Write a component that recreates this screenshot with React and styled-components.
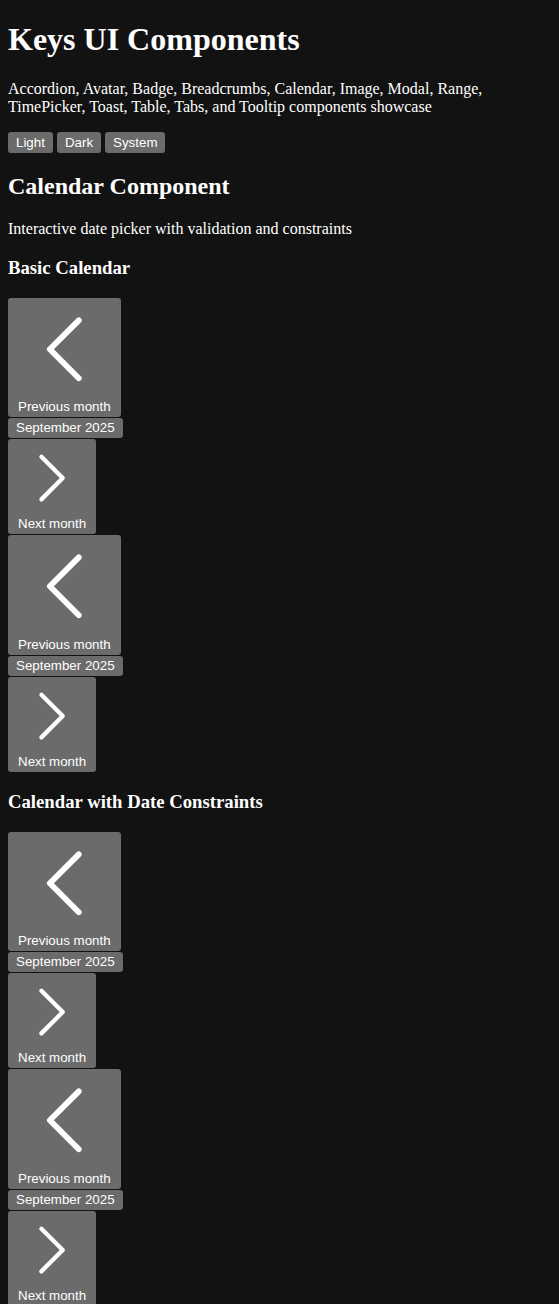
import React from "react";
import styled, { createGlobalStyle } from "styled-components";

const GlobalStyle = createGlobalStyle`
  :root {
    color-scheme: dark;
  }

  html,
  body {
    margin: 0;
    height: 100%;
    overflow: hidden;
    background: #121212;
  }

  body {
    color: #fff;
    font-family: "Liberation Serif", "Times New Roman", serif;
  }
`;

const themes = ["Light", "Dark", "System"];

const calendarDemos = [
  "Basic Calendar",
  "Calendar with Date Constraints",
  "Calendar with Disabled Dates",
  "Calendar with Initial Value",
  "Calendar with Validation",
  "Calendar in a Form",
  "Disabled Calendar",
  "Readonly Calendar",
];

const imageDemos = [
  "Basic Image",
  "Image with Fallback",
  "Lazy Loaded Image",
  "Image with Aspect Ratio",
];

const ChevronLeft = () => (
  <Chevron width="24" height="24" viewBox="0 0 24 24" aria-hidden="true">
    <path d="M15.75 19.5 8.25 12l7.5-7.5" />
  </Chevron>
);

const ChevronRight = () => (
  <Chevron width="24" height="24" viewBox="0 0 24 24" aria-hidden="true">
    <path d="m8.25 4.5 7.5 7.5-7.5 7.5" />
  </Chevron>
);

const MonthNav = ({ month }) => (
  <>
    <NavButton type="button">
      <ChevronLeft />
      <span>Previous month</span>
    </NavButton>
    <MonthLabel>{month}</MonthLabel>
    <NavButton type="button">
      <ChevronRight />
      <span>Next month</span>
    </NavButton>
  </>
);

const Calendar = ({ month }) => (
  <CalendarWrap>
    <MonthNav month={month} />
    <MonthNav month={month} />
  </CalendarWrap>
);

const App = () => {
  return (
    <Viewport>
      <GlobalStyle />
      <Page>
        <Title>Keys UI Components</Title>
        <Lead>
          Accordion, Avatar, Badge, Breadcrumbs, Calendar, Image, Modal, Range,
          TimePicker, Toast, Table, Tabs, and Tooltip components showcase
        </Lead>
        <ThemeBar>
          {themes.map((name) => (
            <ThemeButton key={name} type="button">
              {name}
            </ThemeButton>
          ))}
        </ThemeBar>

        <Section>
          <SectionTitle>Calendar Component</SectionTitle>
          <SectionText>Interactive date picker with validation and constraints</SectionText>
          {calendarDemos.map((title) => (
            <Demo key={title}>
              <DemoTitle>{title}</DemoTitle>
              <Calendar month="September 2025" />
            </Demo>
          ))}
        </Section>

        <Section>
          <SectionTitle>Image Component</SectionTitle>
          <SectionText>Responsive images with loading states and fallbacks</SectionText>
          {imageDemos.map((title) => (
            <Demo key={title}>
              <DemoTitle>{title}</DemoTitle>
              <ImageFrame role="img" aria-label={title} />
            </Demo>
          ))}
        </Section>
      </Page>
    </Viewport>
  );
};

const Viewport = styled.div`
  width: 100vw;
  height: 100vh;
  overflow: auto;
  background: #121212;
`;

const Page = styled.main`
  display: block;
  margin: 8px;
`;

const Title = styled.h1`
  font-size: 32px;
  font-weight: bold;
  margin: 21.44px 0;
`;

const Lead = styled.p`
  font-size: 16px;
  margin: 16px 0;
`;

const ThemeBar = styled.div`
  display: flex;
  gap: 4px;
`;

const ThemeButton = styled.button`
  padding: 2px 8px;
  border: none;
  border-radius: 3px;
  background: #6b6b6b;
  color: #fff;
  font-family: "Liberation Sans", Arial, sans-serif;
  font-size: 13.33px;
  line-height: 17px;
  cursor: pointer;
`;

const Section = styled.section``;

const SectionTitle = styled.h2`
  font-size: 24px;
  font-weight: bold;
  margin: 20.5px 0 19.92px;
`;

const SectionText = styled.p`
  font-size: 16px;
  margin: 16px 0;
`;

const Demo = styled.div``;

const DemoTitle = styled.h3`
  font-size: 18.72px;
  font-weight: bold;
  margin: 18.72px 0;
`;

const CalendarWrap = styled.div`
  display: flex;
  flex-direction: column;
  align-items: flex-start;
  gap: 1px;
`;

const NavButton = styled.button`
  display: flex;
  flex-direction: column;
  align-items: center;
  gap: 4px;
  padding: 5px 10px 3px;
  border: none;
  border-radius: 3px;
  background: #6b6b6b;
  color: #fff;
  font-family: "Liberation Sans", Arial, sans-serif;
  font-size: 13.33px;
  line-height: 15px;
  cursor: pointer;
`;

const Chevron = styled.svg`
  display: block;
  width: 100%;
  height: auto;
  fill: none;
  stroke: currentColor;
  stroke-width: 1.5;
  stroke-linecap: round;
  stroke-linejoin: round;
`;

const MonthLabel = styled.span`
  padding: 2px 8px;
  border-radius: 3px;
  background: #6b6b6b;
  color: #fff;
  font-family: "Liberation Sans", Arial, sans-serif;
  font-size: 13.33px;
  line-height: 16px;
`;

const ImageFrame = styled.div`
  width: 1209px;
  height: 4945px;
  background: #1b1b1b;
`;

export default App;
